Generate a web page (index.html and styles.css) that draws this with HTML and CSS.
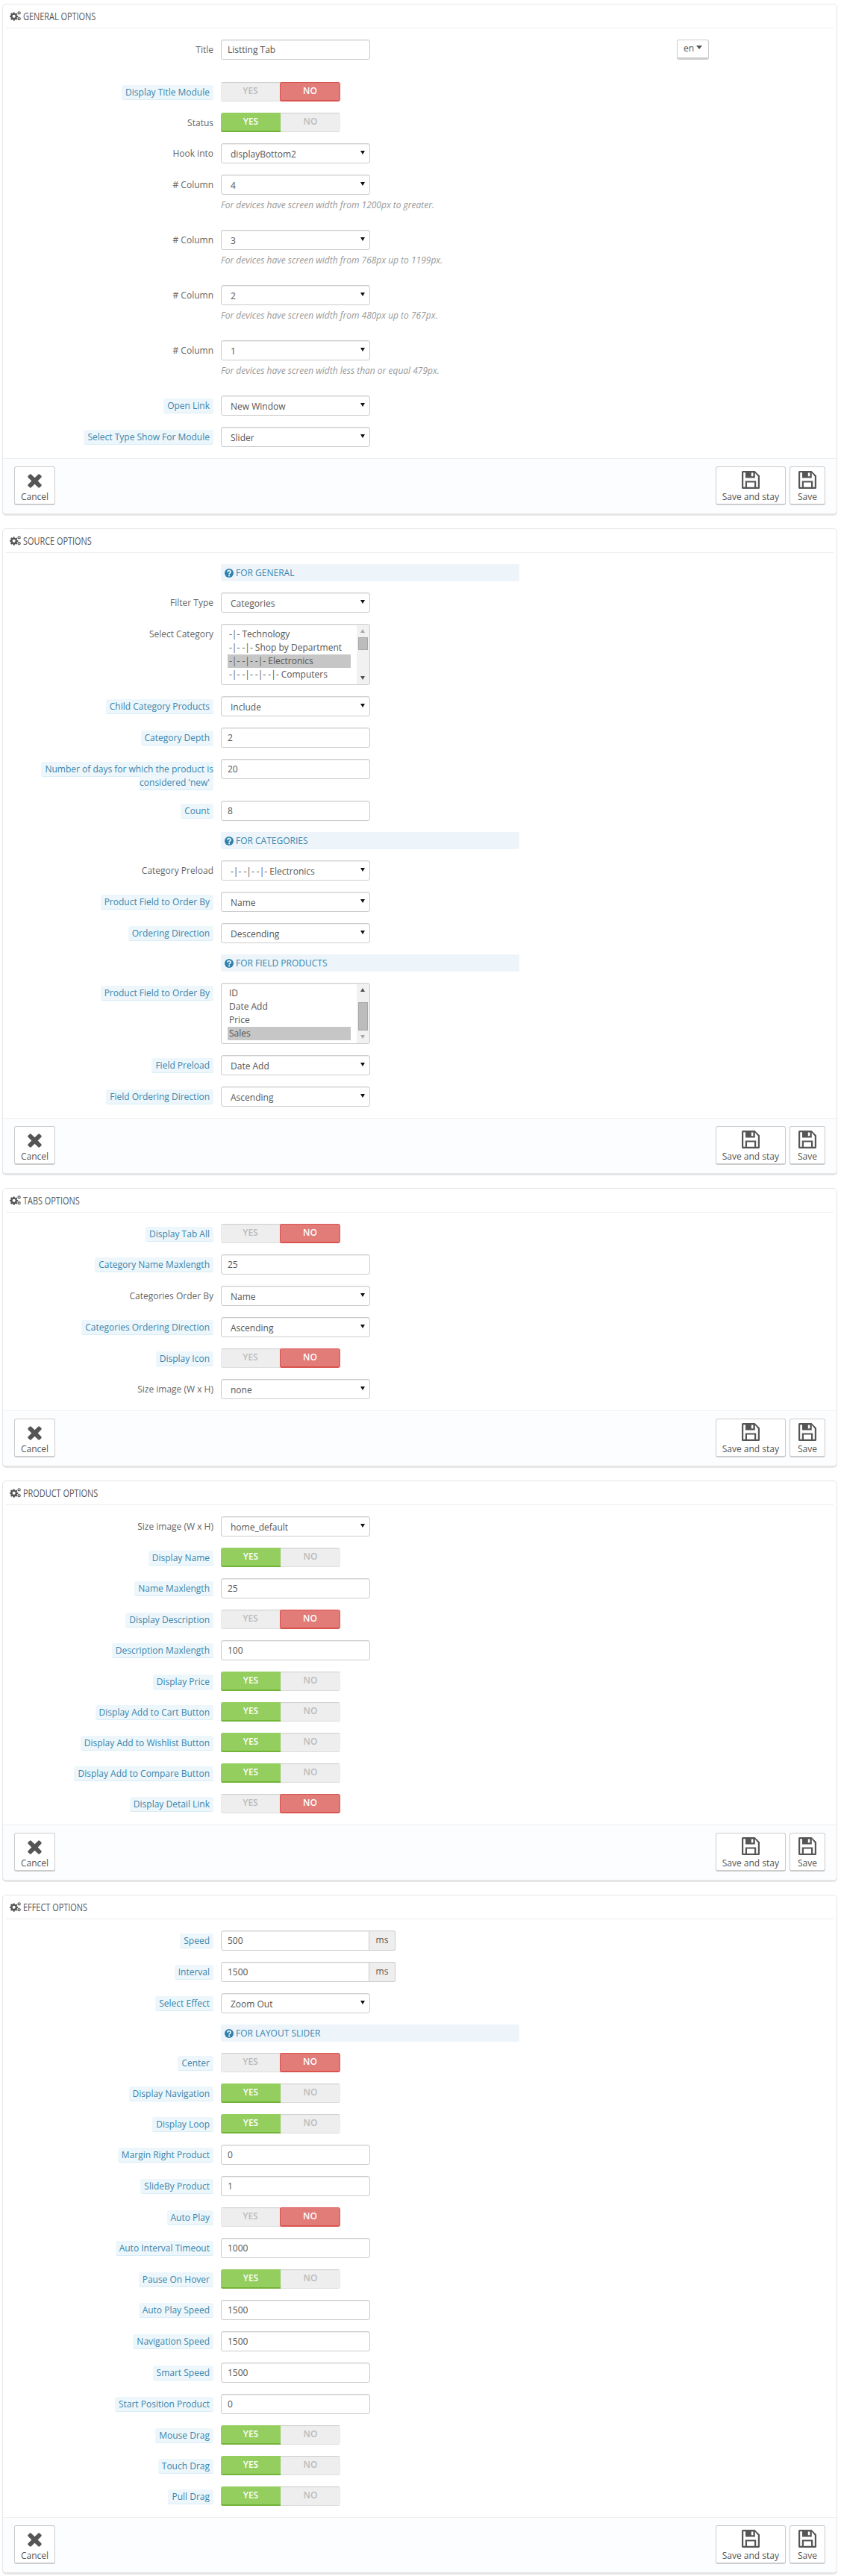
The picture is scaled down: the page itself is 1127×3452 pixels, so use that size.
FILE: index.html
```html
<!DOCTYPE html>
<html lang="en">
<head>
<meta charset="utf-8">
<title>Listing Tab</title>
<link rel="stylesheet" href="styles.css">
</head>
<body>
<svg class="defs" width="0" height="0" aria-hidden="true">
  <symbol id="cogs" viewBox="0 0 16 14">
    <path fill="#555" fill-rule="evenodd" d="M5 1.600h2l.3 1.500 1 .4 1.300-.8 1.400 1.400-.8 1.300.4 1 1.500.3v2l-1.500.3-.4 1 .8 1.300-1.400 1.400-1.300-.8-1 .4-.3 1.500H5l-.3-1.500-1-.4-1.300.8L1 11l.8-1.300-.4-1L0 8.400v-2l1.400-.3.4-1L1 3.800l1.400-1.400 1.300.8 1-.4zM6 5.200a2.200 2.200 0 1 0 0 4.400 2.200 2.200 0 0 0 0-4.400z"/>
    <path fill="none" stroke="#555" stroke-width="1.300" d="M13.500.8a1.700 1.700 0 1 0 0 3.400 1.700 1.700 0 0 0 0-3.400zM13.500 9.200a1.700 1.700 0 1 0 0 3.400 1.700 1.700 0 0 0 0-3.400z"/>
  </symbol>
  <symbol id="floppy" viewBox="0 0 24 24">
    <path fill="#555" fill-rule="evenodd" d="M1.500 0h16L24 6.500v16a1.500 1.500 0 0 1-1.500 1.500h-21A1.500 1.500 0 0 1 0 22.500v-21A1.500 1.500 0 0 1 1.500 0zM2.200 2.200v19.600h2.600V13.500h14.400v8.300h2.600V7.500L17.800 2.800V9.500H5V2.200zM7 21.800h10v-6.300H7zM12.800 2.400v4.800h2.600V2.400z"/>
  </symbol>
  <symbol id="cross" viewBox="0 0 20 20">
    <path fill="#555" d="M5 .8 10 5.600 15 .8a1.500 1.500 0 0 1 2 0L19.300 3a1.500 1.500 0 0 1 0 2l-4.900 5 4.900 5a1.500 1.500 0 0 1 0 2L17 19.200a1.500 1.500 0 0 1-2 0L10 14.400 5 19.200a1.500 1.500 0 0 1-2 0L.7 17a1.500 1.500 0 0 1 0-2l4.900-5L.7 5a1.500 1.500 0 0 1 0-2L3 .8a1.500 1.500 0 0 1 2 0z"/>
  </symbol>
  <symbol id="help" viewBox="0 0 14 14">
    <circle cx="7" cy="7" r="7" fill="#2f80ac"/>
    <path fill="none" stroke="#edf5fb" stroke-width="2" d="M4.600 5.400c0-3.100 4.900-3.100 4.900-.2 0 1.800-2.400 1.800-2.400 3.600"/>
    <rect x="6" y="9.800" width="2.200" height="2.200" fill="#edf5fb"/>
  </symbol>
</svg>

<section class="panel">
  <h3 class="panel-heading"><svg class="cogs"><use href="#cogs"/></svg><span class="cond">General Options</span></h3>
  <div class="row row-lang">
    <label class="lbl">Title</label>
    <input class="field" type="text" value="Listting Tab">
    <button class="lang" type="button">en<span class="caret"></span></button>
  </div>
  <div class="row"><label class="lbl"><span class="hint">Display Title Module</span></label><div class="switch off"><span>YES</span><span>NO</span></div></div>
  <div class="row"><label class="lbl">Status</label><div class="switch on"><span>YES</span><span>NO</span></div></div>
  <div class="row"><label class="lbl">Hook into</label><div class="sel">displayBottom2</div></div>
  <div class="row"><label class="lbl"># Column</label><div class="col"><div class="sel">4</div><p class="help">For devices have screen width from 1200px to greater.</p></div></div>
  <div class="row"><label class="lbl"># Column</label><div class="col"><div class="sel">3</div><p class="help">For devices have screen width from 768px up to 1199px.</p></div></div>
  <div class="row"><label class="lbl"># Column</label><div class="col"><div class="sel">2</div><p class="help">For devices have screen width from 480px up to 767px.</p></div></div>
  <div class="row"><label class="lbl"># Column</label><div class="col"><div class="sel">1</div><p class="help">For devices have screen width less than or equal 479px.</p></div></div>
  <div class="row"><label class="lbl"><span class="hint">Open Link</span></label><div class="sel">New Window</div></div>
  <div class="row"><label class="lbl"><span class="hint">Select Type Show For Module</span></label><div class="sel">Slider</div></div>
  <footer class="panel-footer">
    <a class="btn"><svg class="ico-x"><use href="#cross"/></svg>Cancel</a>
    <a class="btn push"><svg class="ico-s"><use href="#floppy"/></svg>Save and stay</a>
    <a class="btn btn-save"><svg class="ico-s"><use href="#floppy"/></svg>Save</a>
  </footer>
</section>

<section class="panel">
  <h3 class="panel-heading"><svg class="cogs"><use href="#cogs"/></svg><span class="cond">Source Options</span></h3>
  <div class="row"><span class="lbl"></span><div class="note"><svg class="q"><use href="#help"/></svg>FOR GENERAL</div></div>
  <div class="row"><label class="lbl">Filter Type</label><div class="sel">Categories</div></div>
  <div class="row"><label class="lbl">Select Category</label>
    <div class="list">
      <div class="opts"><div>-|- Technology</div><div>-|- -|- Shop by Department</div><div class="picked">-|- -|- -|- Electronics</div><div>-|- -|- -|- -|- Computers</div></div>
      <div class="bar"><i class="up dim"></i><b class="thumb t1"></b><i class="down"></i></div>
    </div>
  </div>
  <div class="row"><label class="lbl"><span class="hint">Child Category Products</span></label><div class="sel">Include</div></div>
  <div class="row"><label class="lbl"><span class="hint">Category Depth</span></label><input class="field" type="text" value="2"></div>
  <div class="row"><label class="lbl"><span class="hint">Number of days for which the product is considered 'new'</span></label><input class="field" type="text" value="20"></div>
  <div class="row"><label class="lbl"><span class="hint">Count</span></label><input class="field" type="text" value="8"></div>
  <div class="row"><span class="lbl"></span><div class="note"><svg class="q"><use href="#help"/></svg>FOR CATEGORIES</div></div>
  <div class="row"><label class="lbl">Category Preload</label><div class="sel">-|- -|- -|- Electronics</div></div>
  <div class="row"><label class="lbl"><span class="hint">Product Field to Order By</span></label><div class="sel">Name</div></div>
  <div class="row"><label class="lbl"><span class="hint">Ordering Direction</span></label><div class="sel">Descending</div></div>
  <div class="row"><span class="lbl"></span><div class="note"><svg class="q"><use href="#help"/></svg>FOR FIELD PRODUCTS</div></div>
  <div class="row"><label class="lbl"><span class="hint">Product Field to Order By</span></label>
    <div class="list">
      <div class="opts"><div>ID</div><div>Date Add</div><div>Price</div><div class="picked">Sales</div></div>
      <div class="bar"><i class="up"></i><b class="thumb t2"></b><i class="down dim"></i></div>
    </div>
  </div>
  <div class="row"><label class="lbl"><span class="hint">Field Preload</span></label><div class="sel">Date Add</div></div>
  <div class="row"><label class="lbl"><span class="hint">Field Ordering Direction</span></label><div class="sel">Ascending</div></div>
  <footer class="panel-footer">
    <a class="btn"><svg class="ico-x"><use href="#cross"/></svg>Cancel</a>
    <a class="btn push"><svg class="ico-s"><use href="#floppy"/></svg>Save and stay</a>
    <a class="btn btn-save"><svg class="ico-s"><use href="#floppy"/></svg>Save</a>
  </footer>
</section>

<section class="panel">
  <h3 class="panel-heading"><svg class="cogs"><use href="#cogs"/></svg><span class="cond">Tabs Options</span></h3>
  <div class="row"><label class="lbl"><span class="hint">Display Tab All</span></label><div class="switch off"><span>YES</span><span>NO</span></div></div>
  <div class="row"><label class="lbl"><span class="hint">Category Name Maxlength</span></label><input class="field" type="text" value="25"></div>
  <div class="row"><label class="lbl">Categories Order By</label><div class="sel">Name</div></div>
  <div class="row"><label class="lbl"><span class="hint">Categories Ordering Direction</span></label><div class="sel">Ascending</div></div>
  <div class="row"><label class="lbl"><span class="hint">Display Icon</span></label><div class="switch off"><span>YES</span><span>NO</span></div></div>
  <div class="row"><label class="lbl">Size image (W x H)</label><div class="sel">none</div></div>
  <footer class="panel-footer">
    <a class="btn"><svg class="ico-x"><use href="#cross"/></svg>Cancel</a>
    <a class="btn push"><svg class="ico-s"><use href="#floppy"/></svg>Save and stay</a>
    <a class="btn btn-save"><svg class="ico-s"><use href="#floppy"/></svg>Save</a>
  </footer>
</section>

<section class="panel">
  <h3 class="panel-heading"><svg class="cogs"><use href="#cogs"/></svg><span class="cond">Product Options</span></h3>
  <div class="row"><label class="lbl">Size image (W x H)</label><div class="sel">home_default</div></div>
  <div class="row"><label class="lbl"><span class="hint">Display Name</span></label><div class="switch on"><span>YES</span><span>NO</span></div></div>
  <div class="row"><label class="lbl"><span class="hint">Name Maxlength</span></label><input class="field" type="text" value="25"></div>
  <div class="row"><label class="lbl"><span class="hint">Display Description</span></label><div class="switch off"><span>YES</span><span>NO</span></div></div>
  <div class="row"><label class="lbl"><span class="hint">Description Maxlength</span></label><input class="field" type="text" value="100"></div>
  <div class="row"><label class="lbl"><span class="hint">Display Price</span></label><div class="switch on"><span>YES</span><span>NO</span></div></div>
  <div class="row"><label class="lbl"><span class="hint">Display Add to Cart Button</span></label><div class="switch on"><span>YES</span><span>NO</span></div></div>
  <div class="row"><label class="lbl"><span class="hint">Display Add to Wishlist Button</span></label><div class="switch on"><span>YES</span><span>NO</span></div></div>
  <div class="row"><label class="lbl"><span class="hint">Display Add to Compare Button</span></label><div class="switch on"><span>YES</span><span>NO</span></div></div>
  <div class="row"><label class="lbl"><span class="hint">Display Detail Link</span></label><div class="switch off"><span>YES</span><span>NO</span></div></div>
  <footer class="panel-footer">
    <a class="btn"><svg class="ico-x"><use href="#cross"/></svg>Cancel</a>
    <a class="btn push"><svg class="ico-s"><use href="#floppy"/></svg>Save and stay</a>
    <a class="btn btn-save"><svg class="ico-s"><use href="#floppy"/></svg>Save</a>
  </footer>
</section>

<section class="panel">
  <h3 class="panel-heading"><svg class="cogs"><use href="#cogs"/></svg><span class="cond">Effect Options</span></h3>
  <div class="row"><label class="lbl"><span class="hint">Speed</span></label><div class="group"><input class="field" type="text" value="500"><span class="addon">ms</span></div></div>
  <div class="row"><label class="lbl"><span class="hint">Interval</span></label><div class="group"><input class="field" type="text" value="1500"><span class="addon">ms</span></div></div>
  <div class="row"><label class="lbl"><span class="hint">Select Effect</span></label><div class="sel">Zoom Out</div></div>
  <div class="row"><span class="lbl"></span><div class="note"><svg class="q"><use href="#help"/></svg>FOR LAYOUT SLIDER</div></div>
  <div class="row"><label class="lbl"><span class="hint">Center</span></label><div class="switch off"><span>YES</span><span>NO</span></div></div>
  <div class="row"><label class="lbl"><span class="hint">Display Navigation</span></label><div class="switch on"><span>YES</span><span>NO</span></div></div>
  <div class="row"><label class="lbl"><span class="hint">Display Loop</span></label><div class="switch on"><span>YES</span><span>NO</span></div></div>
  <div class="row"><label class="lbl"><span class="hint">Margin Right Product</span></label><input class="field" type="text" value="0"></div>
  <div class="row"><label class="lbl"><span class="hint">SlideBy Product</span></label><input class="field" type="text" value="1"></div>
  <div class="row"><label class="lbl"><span class="hint">Auto Play</span></label><div class="switch off"><span>YES</span><span>NO</span></div></div>
  <div class="row"><label class="lbl"><span class="hint">Auto Interval Timeout</span></label><input class="field" type="text" value="1000"></div>
  <div class="row"><label class="lbl"><span class="hint">Pause On Hover</span></label><div class="switch on"><span>YES</span><span>NO</span></div></div>
  <div class="row"><label class="lbl"><span class="hint">Auto Play Speed</span></label><input class="field" type="text" value="1500"></div>
  <div class="row"><label class="lbl"><span class="hint">Navigation Speed</span></label><input class="field" type="text" value="1500"></div>
  <div class="row"><label class="lbl"><span class="hint">Smart Speed</span></label><input class="field" type="text" value="1500"></div>
  <div class="row"><label class="lbl"><span class="hint">Start Position Product</span></label><input class="field" type="text" value="0"></div>
  <div class="row"><label class="lbl"><span class="hint">Mouse Drag</span></label><div class="switch on"><span>YES</span><span>NO</span></div></div>
  <div class="row"><label class="lbl"><span class="hint">Touch Drag</span></label><div class="switch on"><span>YES</span><span>NO</span></div></div>
  <div class="row"><label class="lbl"><span class="hint">Pull Drag</span></label><div class="switch on"><span>YES</span><span>NO</span></div></div>
  <footer class="panel-footer">
    <a class="btn"><svg class="ico-x"><use href="#cross"/></svg>Cancel</a>
    <a class="btn push"><svg class="ico-s"><use href="#floppy"/></svg>Save and stay</a>
    <a class="btn btn-save"><svg class="ico-s"><use href="#floppy"/></svg>Save</a>
  </footer>
</section>
</body>
</html>
```
FILE: styles.css
```css
* { box-sizing: border-box; }
html, body { margin: 0; background: #fff; }
body {
  padding: 5px 5px 0 3px;
  font: 12px/18px "Open Sans", sans-serif;
  color: #555;
}
.defs { position: absolute; }

.panel {
  border: 1px solid #e6e6e6;
  border-radius: 5px;
  box-shadow: 0 2px 0 rgba(0, 0, 0, .1);
  padding: 0 4px;
  margin-bottom: 19px;
  background: #fff;
}
.panel-heading {
  display: flex;
  align-items: center;
  height: 32px;
  margin: 0 0 15px;
  border-bottom: 1px solid #eee;
  padding-left: 5px;
  font: 400 14px/31px "Open Sans", sans-serif;
  text-transform: uppercase;
  color: #555;
  white-space: nowrap;
}
.cond {
  display: inline-block;
  transform: scaleX(.78);
  transform-origin: left center;
}
.cogs { width: 15px; height: 13px; margin-right: 3px; flex: none; }

.row { display: flex; align-items: flex-start; margin-bottom: 15px; }
.row-lang { margin-bottom: 30px; }
.lbl {
  flex: none;
  width: 278px;
  padding: 5px 0 0;
  margin-right: 10px;
  text-align: right;
  color: #666;
}
.hint {
  padding: 1px 5px;
  background: #edf7fb;
  border-bottom: 1px solid #d9edf7;
  border-radius: 3px;
  color: #3a84ac;
}

.field, .sel {
  flex: none;
  display: block;
  width: 200px;
  height: 27px;
  border: 1px solid #ccc;
  border-radius: 3px;
  background: #fff;
  font: 12px/27px "Open Sans", sans-serif;
  color: #555;
  box-shadow: inset 0 1px 1px #eee;
}
.field { padding: 0 8px; line-height: 25px; }
.sel { position: relative; padding-left: 12px; }
.sel::after {
  content: "";
  position: absolute;
  right: 6px;
  top: 9px;
  border: solid transparent;
  border-width: 5px 3px 0;
  border-top-color: #111;
}

.col { flex: none; width: 400px; }
.help {
  margin: 5px 0 10px;
  font-style: italic;
  line-height: 17px;
  color: #999;
  white-space: nowrap;
}

.lang {
  margin-left: 411px;
  width: 43px;
  height: 27px;
  padding: 0 0 2px;
  border: 1px solid #ccc;
  border-bottom-width: 3px;
  border-radius: 3px;
  background: #fff;
  font: 12px/20px "Open Sans", sans-serif;
  color: #555;
}
.caret {
  display: inline-block;
  margin-left: 3px;
  vertical-align: 3px;
  border: solid transparent;
  border-width: 5px 4px 0;
  border-top-color: #555;
}

.switch {
  flex: none;
  display: flex;
  width: 160px;
  height: 26px;
  border-radius: 3px;
  overflow: hidden;
  font-size: 12px;
  font-weight: 600;
  line-height: 24px;
  text-align: center;
}
.switch span {
  flex: 1;
  background: #eee;
  color: #bbb;
  box-shadow: inset 0 1px 1px #ccc, inset 0 -1px 0 #ddd;
}
.switch.on span:first-child {
  background: #93ce5f;
  color: #fff;
  border-bottom: 2px solid #72b43a;
  box-shadow: none;
}
.switch.off span:last-child {
  background: #e27c79;
  color: #fff;
  border: 1px solid #d9534f;
  border-bottom-width: 2px;
  border-radius: 2px;
  box-shadow: none;
  line-height: 22px;
}

.note {
  flex: none;
  display: flex;
  align-items: center;
  width: 400px;
  height: 23px;
  padding-left: 5px;
  background: #edf5fb;
  border-radius: 2px;
  color: #3a84ac;
}
.q { width: 12px; height: 12px; margin-right: 3px; flex: none; }

.list {
  flex: none;
  display: flex;
  justify-content: space-between;
  width: 200px;
  height: 82px;
  border: 1px solid #ccc;
  border-radius: 3px;
  background: #fff;
  box-shadow: inset 0 1px 1px #eee;
}
.opts { width: 165px; margin: 4px 0 0 8px; line-height: 18px; white-space: nowrap; }
.opts div { padding-left: 2px; overflow: hidden; height: 18px; }
.picked { background: #c6c6c6; }
.bar {
  position: relative;
  width: 17px;
  background: #f1f1f1;
  border-radius: 0 2px 2px 0;
}
.up, .down {
  position: absolute;
  left: 5px;
  border: solid transparent;
  width: 0;
  height: 0;
}
.up { top: 6px; border-width: 0 3.5px 5px; border-bottom-color: #505050; }
.down { bottom: 6px; border-width: 5px 3.5px 0; border-top-color: #505050; }
.up.dim { border-bottom-color: #a8a8a8; }
.down.dim { border-top-color: #a8a8a8; }
.thumb {
  position: absolute;
  left: 2px;
  width: 13px;
  background: #bcbcbc;
  border: 1px solid #a8a8a8;
}
.t1 { top: 17px; height: 17px; }
.t2 { top: 25px; height: 38px; }

.group { flex: none; display: flex; width: 234px; }
.group .field { border-radius: 3px 0 0 3px; width: 199px; }
.addon {
  flex: 1;
  height: 27px;
  border: 1px solid #ccc;
  border-left: 0;
  border-radius: 0 3px 3px 0;
  background: #eee;
  text-align: center;
  line-height: 24px;
}

.panel-footer {
  display: flex;
  gap: 5px;
  height: 74px;
  margin: 0 -4px;
  padding: 10px 15px;
  background: #fcfdfe;
  border-top: 1px solid #eee;
  border-radius: 0 0 4px 4px;
}
.btn {
  display: flex;
  flex-direction: column;
  align-items: center;
  height: 52px;
  padding: 5px 8px 0;
  border: 1px solid #ccc;
  border-bottom-width: 2px;
  border-radius: 3px;
  background: #fff;
  color: #555;
  white-space: nowrap;
}
.btn-save { width: 48px; padding-left: 0; padding-right: 0; }
.push { margin-left: auto; }
.ico-x { width: 19px; height: 19px; margin: 4px 0 3px; }
.ico-s { width: 24px; height: 24px; margin-bottom: 2px; }
```
